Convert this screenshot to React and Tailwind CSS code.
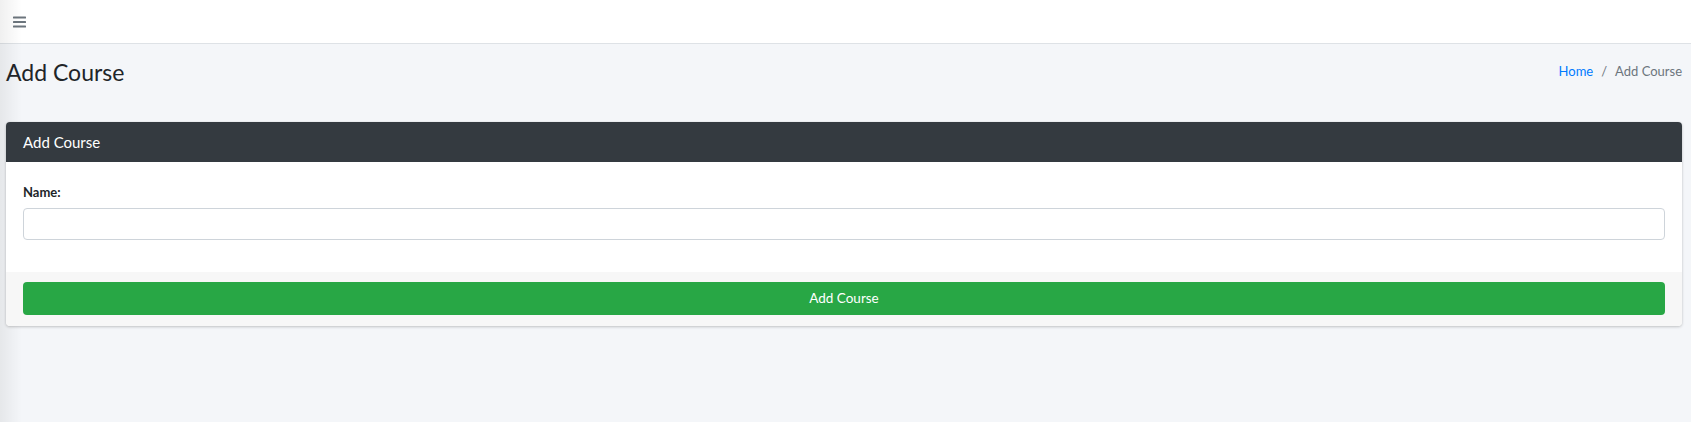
export default function App() {
  return (
    <div className="relative min-h-screen bg-[#f4f6f9] font-['Lato',sans-serif] text-[#212529]">
      <nav className="flex h-[44px] items-center border-b border-[#dee2e6] bg-white px-[13px]">
        <button type="button" className="flex h-[14px] w-[13px] items-center text-[#6c757d]">
          <svg width="13" height="12" viewBox="0 0 13 12" fill="currentColor">
            <rect x="0" y="0.5" width="13" height="2" rx="0.5" />
            <rect x="0" y="5" width="13" height="2" rx="0.5" />
            <rect x="0" y="9.5" width="13" height="2" rx="0.5" />
          </svg>
        </button>
      </nav>

      <div className="pointer-events-none absolute left-0 top-0 h-full w-[22px] bg-linear-to-r from-black/[0.06] to-transparent" />

      <main className="relative pl-[6px] pr-[9px]">
        <div className="flex items-start justify-between pt-[14px]">
          <h1 className="text-[23px] leading-[29px] font-normal text-[#212529]">Add Course</h1>
          <ol className="flex items-center pt-[3px] text-[13px] leading-[20px]">
            <li>
              <a href="#" className="text-[#007bff]">Home</a>
            </li>
            <li className="px-[8px] text-[#6c757d]">/</li>
            <li className="text-[#6c757d]">Add Course</li>
          </ol>
        </div>

        <div className="mt-[35px] rounded-[4px] bg-white shadow-[0_0_1px_rgba(0,0,0,0.125),0_1px_3px_rgba(0,0,0,0.2)]">
          <div className="flex h-[40px] items-center rounded-t-[4px] bg-[#343a40] px-[17px]">
            <h3 className="text-[15px] font-normal text-white">Add Course</h3>
          </div>
          <div className="px-[17px] pt-[20px] pb-[18px]">
            <label className="block text-[13px] leading-[21px] font-bold text-[#212529]">Name:</label>
            <input
              type="text"
              className="mt-[5px] block h-[32px] w-full rounded-[4px] border border-[#ced4da] bg-white px-3 text-[14px] outline-none"
            />
            <div className="h-[14px]" />
          </div>
          <div className="rounded-b-[4px] bg-[#f7f7f7] px-[17px] py-[10px] pb-[11px]">
            <button
              type="submit"
              className="flex h-[33px] w-full items-center justify-center rounded-[4px] bg-[#28a745] text-[13.5px] text-white"
            >
              Add Course
            </button>
          </div>
        </div>
      </main>
    </div>
  );
}
